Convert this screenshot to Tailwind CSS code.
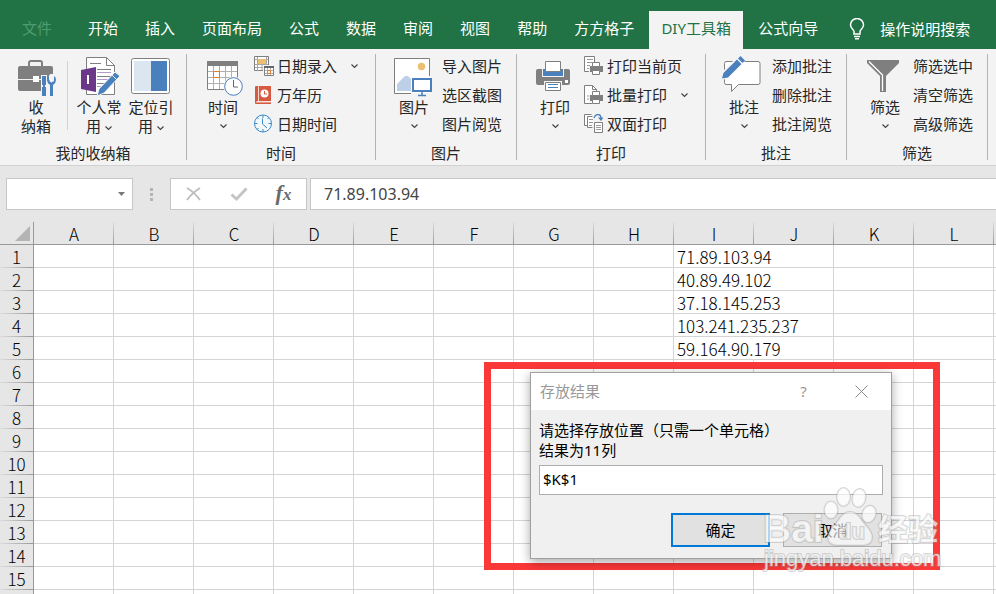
<!DOCTYPE html>
<html lang="zh-CN">
<head>
  <meta charset="UTF-8" />
  <meta name="viewport" content="width=device-width, initial-scale=1.0" />
  <title>DIY工具箱</title>
  <script src="https://cdn.jsdelivr.net/npm/@tailwindcss/browser@4"></script>
</head>
<body class="h-screen overflow-hidden bg-white font-['Noto_Sans','Noto_Sans_CJK_SC',sans-serif] text-[15px] text-[#262626]">
  <div class="relative h-full overflow-hidden whitespace-nowrap">

    <!-- Tabs -->
    <nav class="flex h-[49px] items-end gap-[3px] bg-[#217346] pl-[10px] text-white">
      <button class="mr-[9px] h-[38px] px-3 pb-1 text-[#4f9b70]">文件</button>
      <button class="h-[38px] px-3 pb-1">开始</button>
      <button class="h-[38px] px-3 pb-1">插入</button>
      <button class="h-[38px] px-3 pb-1">页面布局</button>
      <button class="h-[38px] px-3 pb-1">公式</button>
      <button class="h-[38px] px-3 pb-1">数据</button>
      <button class="h-[38px] px-3 pb-1">审阅</button>
      <button class="h-[38px] px-3 pb-1">视图</button>
      <button class="h-[38px] px-3 pb-1">帮助</button>
      <button class="h-[38px] px-3 pb-1">方方格子</button>
      <button class="h-[38px] w-[94px] bg-[#f3f3f3] pb-1 text-[#217346]">DIY工具箱</button>
      <button class="h-[38px] px-3 pb-1">公式向导</button>
      <button class="ml-4 flex h-[38px] items-center gap-[15px] pb-[2px]">
        <svg class="h-[22px] w-4" viewBox="0 0 16 22" fill="none" stroke="#fff" stroke-width="1.5"><path d="M5 16v-2.500C5 11.500 1.500 10.500 1.500 7a6.500 6.500 0 0 1 13 0c0 3.500-3.500 4.500-3.500 6.500V16zM5 18.500h6M6 20.700h4" /></svg>
        操作说明搜索
      </button>
    </nav>

    <!-- Ribbon -->
    <div class="flex h-[117px] border-b border-[#d2d2d2] bg-[#f3f3f3] py-[5px]">
      <section class="flex w-[187px] flex-col border-r border-[#b4b4b4]">
        <div class="flex h-[92px] items-start pl-[10px]">
          <button class="flex w-[52px] flex-col items-center leading-[19px]">
            <svg class="size-11" viewBox="0 0 44 44">
              <path d="M15 12V9q0-2 2-2h9q2 0 2 2v3" fill="none" stroke="#7f7f7f" stroke-width="2" />
              <rect x="4" y="12" width="35" height="25" rx="2" fill="#7f7f7f" />
              <path d="M4 25.500h35" stroke="#f3f3f3" stroke-width="1" />
              <rect x="19" y="22" width="6" height="6" fill="#fff" />
              <path d="M27 21h6v6h3l-2-3 2-4h6l2 4-3 6v13H27z" fill="#f3f3f3" />
              <path d="M28 22h4v9h-1v2h1v9h-4v-9h1v-2h-1z" fill="#4a80bb" />
              <path d="M35 22v5l2.500 1.500L40 27v-5q2 1 2 4t-3 5v11h-3V31q-3-2-3-5t2-4z" fill="#4a80bb" />
            </svg>
            <span>收<br />纳箱</span>
          </button>
          <div class="mx-[5px] mt-[7px] h-[69px] w-px bg-[#d2d2d2]"></div>
          <button class="flex w-[52px] flex-col items-center leading-[19px]">
            <svg class="size-11" viewBox="0 0 44 44">
              <path d="M9.500 3.500h20l8 8v29h-28z" fill="#fff" stroke="#7f7f7f" />
              <path d="M29.500 3.500v8h8" fill="none" stroke="#7f7f7f" />
              <path d="M13 9.500h11M20 15.500h14M20 22.500h14M20 29.500h8" stroke="#7f7f7f" />
              <path d="M20 18.500h14M20 25.500h11M20 32.500h5" stroke="#b59bcb" />
              <path d="M4 16l15-3v25L4 35z" fill="#6b3789" />
              <path d="M11 21v9" stroke="#fff" stroke-width="2" />
              <path d="M20 42l2-7L38 18l5 4-16 17z" fill="#4a80bb" stroke="#f3f3f3" />
              <path d="M35 21l5 5" stroke="#f3f3f3" />
            </svg>
            <span>个人常<br />用 <svg class="inline h-2 w-[7px]" viewBox="0 0 7 8" fill="none" stroke="#444" stroke-width="1.200"><path d="M.5 2.500l3 3 3-3" /></svg></span>
          </button>
          <button class="flex w-[52px] flex-col items-center leading-[19px]">
            <svg class="size-11" viewBox="0 0 44 44">
              <rect x="2.500" y="4.500" width="38" height="35" rx="2" fill="#fff" stroke="#7f7f7f" />
              <path d="M5 7h17v30H5z" fill="#dce6f1" />
              <path d="M22 7h16v30H22z" fill="#4a80bb" />
            </svg>
            <span>定位引<br />用 <svg class="inline h-2 w-[7px]" viewBox="0 0 7 8" fill="none" stroke="#444" stroke-width="1.200"><path d="M.5 2.500l3 3 3-3" /></svg></span>
          </button>
        </div>
        <h2 class="text-center leading-[14px]">我的收纳箱</h2>
      </section>

      <section class="flex w-[189px] flex-col border-r border-[#b4b4b4]">
        <div class="flex h-[92px] items-start gap-[5px] pl-[10px]">
          <button class="flex w-[52px] flex-col items-center leading-[19px]">
            <svg class="size-11" viewBox="0 0 44 44">
              <path d="M6.500 8.500h30v27h-30z" fill="#fff" stroke="#7f7f7f" />
              <path d="M12.500 12v23M18.500 12v23M24.500 12v23M30.500 12v23M7 17.500h29M7 23.500h29M7 29.500h29" stroke="#b0b0b0" />
              <path d="M6 7h31v5H6z" fill="#7f7f7f" />
              <path d="M12.500 17.500h6v6h-6z" fill="#fff" stroke="#e07b28" />
              <circle cx="32.500" cy="32.500" r="10" fill="#f3f3f3" />
              <circle cx="32.500" cy="32.500" r="8.800" fill="#fff" stroke="#4a80bb" />
              <path d="M32.500 26v7H37" fill="none" stroke="#666" />
            </svg>
            时间
            <svg class="mt-[6px] h-2 w-[7px]" viewBox="0 0 7 8" fill="none" stroke="#444" stroke-width="1.200"><path d="M.5 1.500l3 3 3-3" /></svg>
          </button>
          <div class="flex flex-col gap-[3px]">
            <button class="flex h-[26px] items-center gap-[3px] pb-[2px]">
              <svg class="size-5" viewBox="0 0 20 20">
                <path d="M.5.500h14v14H.5z" fill="#fff" stroke="#7f7f7f" />
                <path d="M3.500 1v14M12.500 1v14M1 3.500h13M1 8.500h13M1 11.500h13M8 8v6" stroke="#a6a6a6" />
                <path d="M4 3h8v5H4z" fill="#eabf72" />
                <path d="M9 9h11v11H9z" fill="#f3f3f3" />
                <path d="M10.500 11.500h9v8h-9z" fill="#fff" stroke="#7f7f7f" />
                <path d="M10 10h10v2H10z" fill="#666" />
                <path d="M13.500 12v7M16.500 12v7M11 14.500h8M11 17.500h8" stroke="#b0b0b0" />
                <path d="M13.500 14.500h3v3h-3z" fill="#fff" stroke="#e07b28" />
              </svg>
              日期录入
              <svg class="ml-[11px] h-2 w-[7px]" viewBox="0 0 7 8" fill="none" stroke="#444" stroke-width="1.200"><path d="M.5 2.500l3 3 3-3" /></svg>
            </button>
            <button class="flex h-[26px] items-center gap-[3px] pb-[2px]">
              <svg class="size-5" viewBox="0 0 20 20">
                <path d="M1 2q0-1 1-1h15v15H3v1h14v2H2q-1 0-1-1z" fill="#d65a3f" />
                <path d="M4.500 1v15M2 17h15" stroke="#f7d5cc" />
                <circle cx="10.500" cy="8.500" r="4" fill="#fff" />
                <path d="M10.500 6v3h2.500" fill="none" stroke="#d65a3f" />
              </svg>
              万年历
            </button>
            <button class="flex h-[26px] items-center gap-[3px] pb-[2px]">
              <svg class="size-5" viewBox="0 0 20 20">
                <circle cx="9" cy="9.500" r="8.500" fill="#f3f8fc" stroke="#3c8ac9" />
                <path d="M9 1v3M9 15v3M.5 9.500h3M14.500 9.500h3M3 3.500l1.500 1.500M15 3.500L13.500 5M3 15.500L4.500 14" stroke="#3c8ac9" />
                <path d="M8.500 4.500v5.500l4.500 4" fill="none" stroke="#3c8ac9" />
              </svg>
              日期时间
            </button>
          </div>
        </div>
        <h2 class="text-center leading-[14px]">时间</h2>
      </section>

      <section class="flex w-[141px] flex-col border-r border-[#b4b4b4]">
        <div class="flex h-[92px] items-start gap-[2px] pl-3">
          <button class="flex w-[52px] flex-col items-center leading-[19px]">
            <svg class="size-11" viewBox="0 0 44 44">
              <path d="M2.500 4.500h35v35h-35z" fill="#fff" stroke="#7f7f7f" />
              <circle cx="29.500" cy="12.500" r="3.700" fill="#eabf72" />
              <path d="M5 37V30l8-8h3l6 6v9z" fill="#bdd0e7" />
              <path d="M19 22h23v20H19z" fill="#f3f3f3" />
              <path d="M19 22h19v17H19z" fill="#fff" />
              <path d="M21 25h18v12H21z" fill="#fff" stroke="#4a80bb" stroke-width="2" />
              <path d="M30 38v3M26 41.500h8" stroke="#4a80bb" stroke-width="1.500" />
            </svg>
            图片
            <svg class="mt-[6px] h-2 w-[7px]" viewBox="0 0 7 8" fill="none" stroke="#444" stroke-width="1.200"><path d="M.5 1.500l3 3 3-3" /></svg>
          </button>
          <div class="flex flex-col gap-[3px]">
            <button class="h-[26px] pb-[2px]">导入图片</button>
            <button class="h-[26px] pb-[2px]">选区截图</button>
            <button class="h-[26px] pb-[2px]">图片阅览</button>
          </div>
        </div>
        <h2 class="text-center leading-[14px]">图片</h2>
      </section>

      <section class="flex w-[189px] flex-col border-r border-[#b4b4b4]">
        <div class="flex h-[92px] items-start gap-[3px] pl-3">
          <button class="flex w-[52px] flex-col items-center leading-[19px]">
            <svg class="size-11" viewBox="0 0 44 44">
              <path d="M5 15h30q2 0 2 2v12q0 2-2 2H5q-2 0-2-2V17q0-2 2-2z" fill="#7f7f7f" />
              <path d="M9 14h22v9H9z" fill="#f3f3f3" />
              <path d="M10 15h20v7H10z" fill="#4a80bb" />
              <path d="M12.500 7.500h15v10h-15z" fill="#fff" stroke="#7f7f7f" />
              <path d="M32 26h3v3h-3z" fill="#fff" />
              <path d="M11 27h18v10H11z" fill="#f3f3f3" />
              <path d="M12.500 28.500h15v8h-15z" fill="#fff" stroke="#7f7f7f" />
              <path d="M15 30.500h10M15 33.500h10" stroke="#4a80bb" />
            </svg>
            打印
            <svg class="mt-[6px] h-2 w-[7px]" viewBox="0 0 7 8" fill="none" stroke="#444" stroke-width="1.200"><path d="M.5 1.500l3 3 3-3" /></svg>
          </button>
          <div class="flex flex-col gap-[3px]">
            <button class="flex h-[26px] items-center gap-[3px] pb-[2px]">
              <svg class="size-5" viewBox="0 0 20 20">
                <path d="M.5.500h10v15H.5z" fill="#fff" stroke="#7f7f7f" />
                <path d="M3 3.500h6M3 6.500h6M3 9.500h3M3 12.500h2" stroke="#999" />
                <path d="M5 10h3V6h9v4h3v7h-3v3H8v-3H5z" fill="#f3f3f3" />
                <path d="M6 10h13v6H6z" fill="#7f7f7f" />
                <path d="M8.500 6.500h7v4h-7zM8.500 14.500h7v4h-7z" fill="#fff" stroke="#7f7f7f" />
              </svg>
              打印当前页
            </button>
            <button class="flex h-[26px] items-center gap-[3px] pb-[2px]">
              <svg class="size-5" viewBox="0 0 20 20">
                <path d="M.5.500h8l4 4v14H.5z" fill="#fff" stroke="#7f7f7f" />
                <path d="M8.500.500v4h4" fill="none" stroke="#7f7f7f" />
                <path d="M5 10h3V6h9v4h3v7h-3v3H8v-3H5z" fill="#f3f3f3" />
                <path d="M6 10h13v6H6z" fill="#7f7f7f" />
                <path d="M8.500 6.500h7v4h-7zM8.500 14.500h7v4h-7z" fill="#fff" stroke="#7f7f7f" />
                <path d="M3 11h2M3 14h2" stroke="#999" />
              </svg>
              批量打印
              <svg class="ml-[11px] h-2 w-[7px]" viewBox="0 0 7 8" fill="none" stroke="#444" stroke-width="1.200"><path d="M.5 2.500l3 3 3-3" /></svg>
            </button>
            <button class="flex h-[26px] items-center gap-[3px] pb-[2px]">
              <svg class="size-5" viewBox="0 0 20 20">
                <path d="M7.500.500h-7v11H3M8.500 2.500h-5v11h5" fill="#fff" stroke="#7f7f7f" />
                <path d="M5 5.500h4M5 8.500h4M5 11.500h3" stroke="#999" />
                <path d="M10.500 8.500h8v10h-8z" fill="#fff" stroke="#7f7f7f" />
                <path d="M12 11.500h5M12 13.500h5M12 15.500h5" stroke="#999" />
                <path d="M10 4q1-3.500 4-3.500T17 5" fill="none" stroke="#4a80bb" stroke-width="1.300" />
                <path d="M14 3.500h5.500L17 7z" fill="#4a80bb" />
              </svg>
              双面打印
            </button>
          </div>
        </div>
        <h2 class="text-center leading-[14px]">打印</h2>
      </section>

      <section class="flex w-[141px] flex-col border-r border-[#b4b4b4]">
        <div class="flex h-[92px] items-start gap-[2px] pl-3">
          <button class="flex w-[52px] flex-col items-center leading-[19px]">
            <svg class="size-11" viewBox="0 0 44 44">
              <path d="M4 7.500h32q2 0 2 2v19q0 2-2 2H16.500l-7 7v-7H4q-1.500 0-1.500-2v-19q0-2 1.500-2z" fill="#fff" stroke="#7f7f7f" />
              <path d="M-1 26V19L17 1l6 6L5 25z" fill="#f3f3f3" />
              <path d="M10 8h12L7 23.500H3z" fill="#fff" />
              <path d="M0 24.500L1.500 19 15 5.500l4.500 4.500L6 23.500zM16 4.500L18.500 2 23 6.500 20.500 9z" fill="#4a80bb" />
            </svg>
            批注
            <svg class="mt-[6px] h-2 w-[7px]" viewBox="0 0 7 8" fill="none" stroke="#444" stroke-width="1.200"><path d="M.5 1.500l3 3 3-3" /></svg>
          </button>
          <div class="flex flex-col gap-[3px]">
            <button class="h-[26px] pb-[2px]">添加批注</button>
            <button class="h-[26px] pb-[2px]">删除批注</button>
            <button class="h-[26px] pb-[2px]">批注阅览</button>
          </div>
        </div>
        <h2 class="text-center leading-[14px]">批注</h2>
      </section>

      <section class="flex w-[141px] flex-col border-r border-[#b4b4b4]">
        <div class="flex h-[92px] items-start gap-[2px] pl-3">
          <button class="flex w-[52px] flex-col items-center leading-[19px]">
            <svg class="size-11" viewBox="0 0 44 44">
              <path d="M4 6h32v3L23 22v16h-6V22L4 9z" fill="#7f7f7f" />
              <path d="M6 7.500L19.500 21v16" fill="none" stroke="#fff" stroke-width="1.300" />
            </svg>
            筛选
            <svg class="mt-[6px] h-2 w-[7px]" viewBox="0 0 7 8" fill="none" stroke="#444" stroke-width="1.200"><path d="M.5 1.500l3 3 3-3" /></svg>
          </button>
          <div class="flex flex-col gap-[3px]">
            <button class="h-[26px] pb-[2px]">筛选选中</button>
            <button class="h-[26px] pb-[2px]">清空筛选</button>
            <button class="h-[26px] pb-[2px]">高级筛选</button>
          </div>
        </div>
        <h2 class="text-center leading-[14px]">筛选</h2>
      </section>
    </div>

    <!-- Formula bar -->
    <div class="flex h-14 items-center bg-[#e6e6e6] pl-[6px]">
      <div class="flex h-8 w-[127px] items-center border border-[#c6c6c6] bg-white">
        <input type="text" aria-label="名称框" class="min-w-0 flex-1 px-2 outline-none" />
        <button aria-label="展开名称框" class="px-[7px]"><svg class="h-1 w-[7px]" viewBox="0 0 7 4"><path d="M0 0h7L3.500 4z" fill="#777" /></svg></button>
      </div>
      <div class="mx-[17px] flex flex-col gap-[2px]">
        <span class="size-[3px] bg-[#b4b4b4]"></span>
        <span class="size-[3px] bg-[#b4b4b4]"></span>
        <span class="size-[3px] bg-[#b4b4b4]"></span>
      </div>
      <div class="flex h-8 w-[137px] items-center border border-[#c6c6c6] bg-white">
        <button aria-label="取消输入" class="flex w-[45px] justify-center"><svg class="size-4" viewBox="0 0 16 16" fill="none" stroke="#bdbdbd" stroke-width="1.800"><path d="M1 2q7 4 13 12M14 2Q6 7 1 14" /></svg></button>
        <button aria-label="输入" class="flex w-[45px] justify-center"><svg class="h-4 w-[18px]" viewBox="0 0 18 16" fill="none" stroke="#c4c4c4" stroke-width="3"><path d="M1.500 8.500L6.500 13 16.500 2.500" /></svg></button>
        <button aria-label="插入函数" class="w-[45px] font-['Liberation_Serif',serif] text-[22px] leading-6 font-bold text-[#6a6a6a] italic">f<span class="text-[17px]">x</span></button>
      </div>
      <input type="text" aria-label="编辑栏" value="71.89.103.94" class="ml-[3px] h-8 min-w-0 flex-1 border border-r-0 border-[#c6c6c6] bg-white px-[13px] text-base text-[#444] outline-none" />
    </div>

    <!-- Sheet -->
    <table class="w-full table-fixed border-separate border-spacing-0 font-['Noto_Sans_CJK_SC',sans-serif] text-[17px] leading-5 font-light text-black">
      <thead>
        <tr id="columns"></tr>
      </thead>
      <tbody id="rows"></tbody>
    </table>

    <!-- Dialog with its highlight frame -->
    <div class="absolute top-[362px] left-[484px] border-[7px] border-[#fb3838] pt-[3px] pr-[41px] pb-1 pl-[39px]">
      <form role="dialog" aria-labelledby="dialogTitle" class="w-[362px] border border-[#a0a0a0] bg-[#f0f0f0] text-black shadow-[0_3px_10px_rgba(0,0,0,0.35)]">
        <div class="flex h-[37px] items-center bg-white pl-[9px] text-[#999]">
          <h3 id="dialogTitle" class="flex-1">存放结果</h3>
          <button type="button" aria-label="帮助" class="w-[57px]">?</button>
          <button type="button" aria-label="关闭" class="flex w-[59px] justify-center"><svg class="size-[13px]" viewBox="0 0 13 13" stroke="#888"><path d="M.5.500l12 12M12.500.500l-12 12" /></svg></button>
        </div>
        <div class="px-2 pt-[10px] pb-[11px]">
          <label for="target" class="block leading-5">请选择存放位置（只需一个单元格）<br />结果为11列</label>
          <input id="target" type="text" value="$K$1" class="mt-[5px] h-[30px] w-full border border-[#abadb3] bg-white px-[3px] pb-[3px]" />
          <div class="mt-[18px] flex justify-end gap-[13px] pr-px">
            <button type="button" class="h-[34px] w-[99px] border-2 border-[#0078d7] bg-[#e1e1e1]">确定</button>
            <button type="button" class="h-[34px] w-[99px] border border-[#adadad] bg-[#e1e1e1]">取消</button>
          </div>
        </div>
      </form>
    </div>

    <!-- Watermark -->
    <svg class="pointer-events-none absolute top-[484px] left-[760px] h-[90px] w-[184px]" viewBox="0 0 184 90" fill="#fff" fill-opacity="0.7" stroke="#999" stroke-opacity="0.4" stroke-width="2" paint-order="stroke" font-family="Liberation Sans, Noto Sans CJK SC, sans-serif">
      <ellipse cx="71" cy="26" rx="6.500" ry="8.500" />
      <ellipse cx="83.500" cy="13" rx="6.500" ry="9" />
      <ellipse cx="99" cy="14" rx="6.500" ry="9" transform="rotate(12 99 14)" />
      <ellipse cx="109" cy="30" rx="6.500" ry="8.500" transform="rotate(20 109 30)" />
      <path d="M90 28q7 0 12 9l6 7q4 5 4 9 0 8-9 8H77q-9 0-9-8 0-4 4-9l6-7q5-9 12-9z" fill-opacity="0.6" />
      <text x="3" y="58" font-size="39" font-weight="bold">Bai</text>
      <text x="78" y="55" font-size="22" font-weight="bold" fill-opacity="0.5">du</text>
      <text x="118" y="56" font-size="30" font-weight="bold">经验</text>
      <text x="4" y="82" font-size="22">jingyan.baidu.com</text>
    </svg>
  </div>

  <script>
    const columns = ["A", "B", "C", "D", "E", "F", "G", "H", "I", "J", "K", "L"];
    const addresses = ["71.89.103.94", "40.89.49.102", "37.18.145.253", "103.241.235.237", "59.164.90.179"];
    const cell = '<td class="h-[23px] border-r border-b border-[#d4d4d4] bg-white"></td>';

    let head = '<th aria-label="全选" class="h-[23px] w-[34px] border-r border-b border-[#999] bg-[#e6e6e6]"><svg class="ml-auto mr-[3px] size-[15px]" viewBox="0 0 15 15"><path d="M15 0v15H0z" fill="#b4b4b4" /></svg></th>';
    for (const name of columns) {
      head += `<th class="h-[23px] w-20 border-b border-[#999] bg-[#e6e6e6] bg-[linear-gradient(to_bottom,#dcdcdc,#999)] bg-[length:1px_100%] bg-right bg-no-repeat pt-[2px] font-light">${name}</th>`;
    }
    document.getElementById("columns").innerHTML = head + '<th class="border-b border-[#999] bg-[#e6e6e6]"></th>';

    let body = "";
    for (let row = 1; row <= 15; row++) {
      const address = addresses[row - 1];
      body += `<tr><th class="h-[23px] border-r border-[#999] bg-[#e6e6e6] bg-[linear-gradient(to_right,#dcdcdc,#999)] bg-[length:100%_1px] bg-bottom bg-no-repeat font-light">${row}</th>`;
      // addresses are wider than one column and run over into J
      body += address
        ? cell.repeat(8) + `<td colspan="2" class="h-[23px] border-r border-b border-[#d4d4d4] bg-white pt-[2px] pl-[3px]">${address}</td>` + cell.repeat(2)
        : cell.repeat(12);
      body += '<td class="border-b border-[#d4d4d4] bg-white"></td></tr>';
    }
    // strip of the next row, only its top shows
    body += '<tr><th class="h-[23px] border-r border-[#999] bg-[#e6e6e6]"></th>' + cell.repeat(12) + "<td></td></tr>";
    document.getElementById("rows").innerHTML = body;
  </script>
</body>
</html>
